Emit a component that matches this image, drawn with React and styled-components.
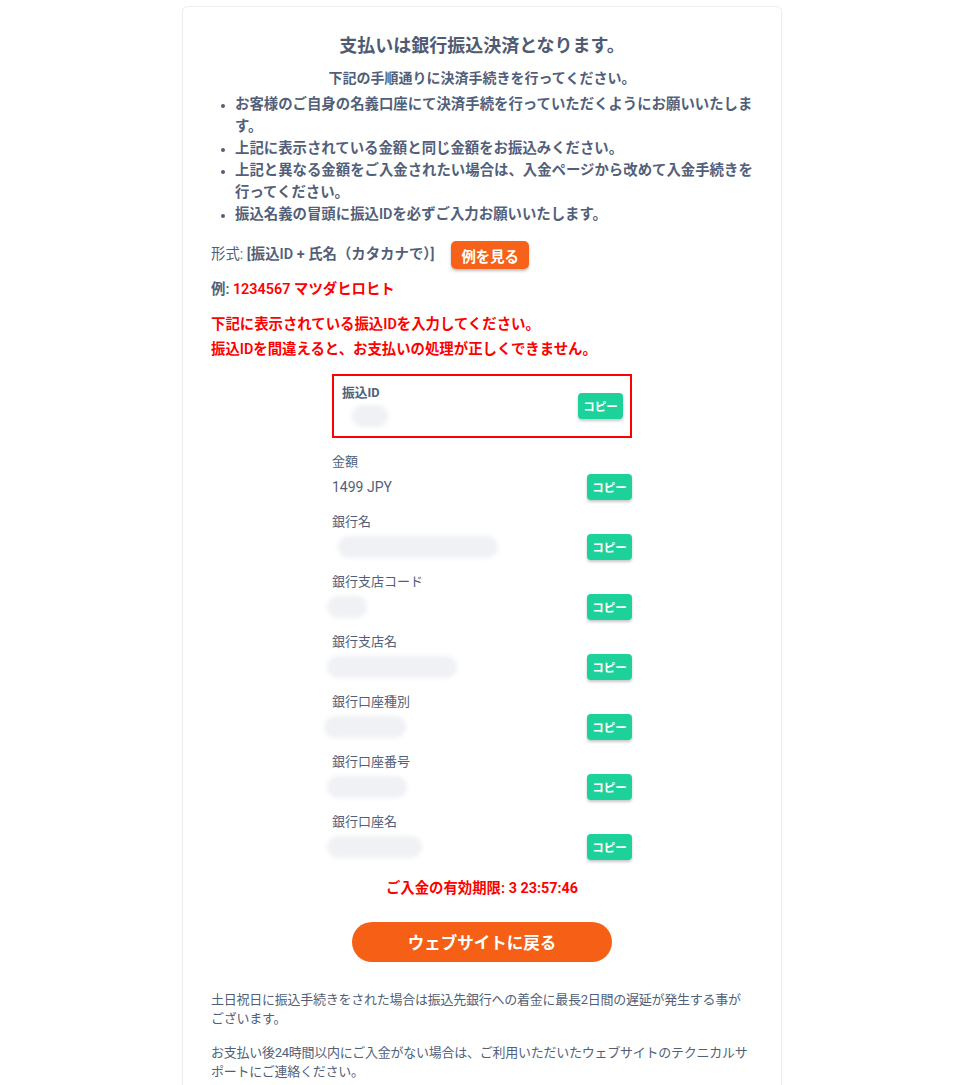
import React from 'react';
import styled, { createGlobalStyle } from 'styled-components';

const GlobalStyle = createGlobalStyle`
  html, body {
    margin: 0;
    padding: 0;
    background: #ffffff;
  }
  body {
    font-family: Roboto, "Noto Sans CJK JP", sans-serif;
    color: #525f7a;
  }
`;

const rows = [
  { label: '金額', value: '1499 JPY' },
  { label: '銀行名', blur: 160, offset: 6 },
  { label: '銀行支店コード', blur: 40, offset: -5 },
  { label: '銀行支店名', blur: 130, offset: -5 },
  { label: '銀行口座種別', blur: 82, offset: -8 },
  { label: '銀行口座番号', blur: 80, offset: -5 },
  { label: '銀行口座名', blur: 95, offset: -5 },
];

const notes = [
  'お客様のご自身の名義口座にて決済手続を行っていただくようにお願いいたします。',
  '上記に表示されている金額と同じ金額をお振込みください。',
  '上記と異なる金額をご入金されたい場合は、入金ページから改めて入金手続きを行ってください。',
  '振込名義の冒頭に振込IDを必ずご入力お願いいたします。',
];

export default function App() {
  return (
    <>
      <GlobalStyle />
      <Page>
        <Card>
          <Title>支払いは銀行振込決済となります。</Title>
          <Subtitle>下記の手順通りに決済手続きを行ってください。</Subtitle>
          <NoteList>
            {notes.map((n) => (
              <li key={n}>{n}</li>
            ))}
          </NoteList>

          <FormatRow>
            <span>
              形式: <strong>[振込ID + 氏名（カタカナで）]</strong>
            </span>
            <ExampleButton>例を見る</ExampleButton>
          </FormatRow>
          <ExampleLine>
            <strong>例: </strong>
            <Red>1234567 マツダヒロヒト</Red>
          </ExampleLine>

          <Warning>
            <p>下記に表示されている振込IDを入力してください。</p>
            <p>振込IDを間違えると、お支払いの処理が正しくできません。</p>
          </Warning>

          <Details>
            <IdBox>
              <div>
                <IdLabel>振込ID</IdLabel>
                <Blur $width={36} $offset={10} />
              </div>
              <CopyButton>コピー</CopyButton>
            </IdBox>

            {rows.map((r) => (
              <Row key={r.label}>
                <Label>{r.label}</Label>
                <ValueLine>
                  {r.value ? <Value>{r.value}</Value> : <Blur $width={r.blur} $offset={r.offset || 0} />}
                  <CopyButton>コピー</CopyButton>
                </ValueLine>
              </Row>
            ))}
          </Details>

          <Expiry>ご入金の有効期限: 3 23:57:46</Expiry>
          <BackButton>ウェブサイトに戻る</BackButton>

          <Footer>
            <p>土日祝日に振込手続きをされた場合は振込先銀行への着金に最長2日間の遅延が発生する事がございます。</p>
            <p>お支払い後24時間以内にご入金がない場合は、ご利用いただいたウェブサイトのテクニカルサポートにご連絡ください。</p>
          </Footer>
        </Card>
      </Page>
    </>
  );
}

const Page = styled.div`
  padding: 6px 6px 0 0;
  display: flex;
  justify-content: center;
`;

const Card = styled.div`
  width: 542px;
  padding: 25px 28px 40px;
  background: #fff;
  border: 1px solid #eeeeee;
  border-radius: 6px;
  box-shadow: 0 1px 3px rgba(0, 0, 0, 0.04);
`;

const Title = styled.h1`
  margin: 0;
  text-align: center;
  font-size: 18px;
  line-height: 27px;
  font-weight: 700;
  color: #4f5b73;
`;

const Subtitle = styled.p`
  margin: 8px 0 0;
  text-align: center;
  font-size: 14px;
  line-height: 22px;
  font-weight: 600;
`;

const NoteList = styled.ul`
  margin: 5px 0 0;
  padding-left: 24px;
  font-size: 14.4px;
  line-height: 22px;
  font-weight: 600;

  li::marker {
    font-size: 12px;
  }
`;

const FormatRow = styled.div`
  margin-top: 15px;
  display: flex;
  align-items: center;
  gap: 17px;
  font-size: 14.4px;
  line-height: 22px;

  strong {
    font-weight: 600;
  }
`;

const ExampleButton = styled.button`
  height: 28px;
  padding: 0 10px;
  border: none;
  border-radius: 5px;
  background: #f6621a;
  color: #fff;
  font-family: inherit;
  font-size: 14.4px;
  font-weight: 700;
  box-shadow: 0 2px 3px rgba(0, 0, 0, 0.25);
`;

const ExampleLine = styled.p`
  margin: 10px 0 0;
  font-size: 14.4px;
  line-height: 22px;

  strong {
    font-weight: 600;
  }
`;

const Red = styled.span`
  color: #ff0000;
  font-weight: 600;
`;

const Warning = styled.div`
  margin-top: 11px;
  color: #ff0000;
  font-size: 14.4px;
  line-height: 25px;
  font-weight: 600;

  p {
    margin: 0;
  }
`;

const Details = styled.div`
  width: 300px;
  margin: 12px auto 0;
`;

const IdBox = styled.div`
  height: 60px;
  border: 2px solid #ff0000;
  padding: 0 7px 0 8px;
  display: flex;
  align-items: center;
  justify-content: space-between;
`;

const IdLabel = styled.div`
  font-size: 12.8px;
  line-height: 16px;
  font-weight: 700;
  margin-bottom: 4px;
`;

const Row = styled.div`
  margin-top: 14px;
  & + & {
    margin-top: 12px;
  }
`;

const Label = styled.div`
  font-size: 13px;
  line-height: 20px;
`;

const ValueLine = styled.div`
  margin-top: 2px;
  height: 26px;
  display: flex;
  align-items: center;
  justify-content: space-between;
`;

const Value = styled.span`
  font-size: 14px;
`;

const Blur = styled.div`
  width: ${(p) => p.$width}px;
  height: 22px;
  margin-left: ${(p) => p.$offset}px;
  border-radius: 11px;
  background: #eff1f4;
  filter: blur(2px);
`;

const CopyButton = styled.button`
  width: 45px;
  height: 26px;
  padding: 0;
  border: none;
  border-radius: 4px;
  background: #1dd19a;
  color: #fff;
  font-family: inherit;
  font-size: 11.5px;
  font-weight: 700;
  box-shadow: 0 2px 3px rgba(0, 0, 0, 0.22);
`;

const Expiry = styled.p`
  margin: 18px 0 0;
  text-align: center;
  color: #ff0000;
  font-size: 14.4px;
  line-height: 22px;
  font-weight: 700;
`;

const BackButton = styled.button`
  display: block;
  width: 260px;
  height: 40px;
  margin: 22px auto 0;
  border: none;
  border-radius: 20px;
  background: #f56016;
  color: #fff;
  font-family: inherit;
  font-size: 16.5px;
  font-weight: 700;
`;

const Footer = styled.div`
  margin-top: 28px;
  font-size: 13px;
  line-height: 19px;
  letter-spacing: -0.25px;
  word-break: break-all;

  p {
    margin: 0 0 15px;
  }
`;
